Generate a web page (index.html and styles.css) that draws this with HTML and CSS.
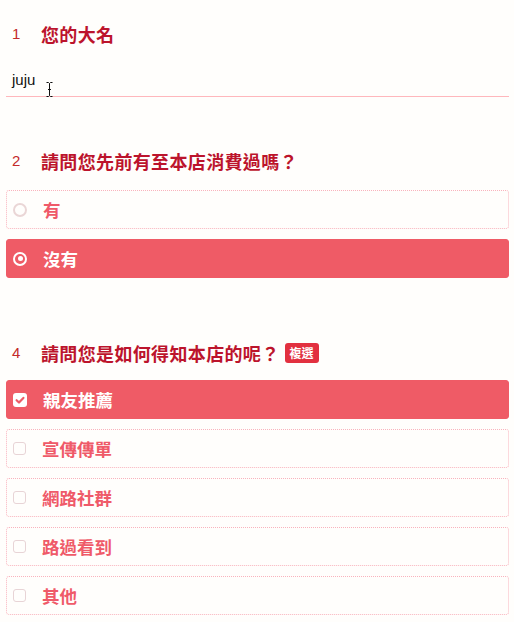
FILE: index.html
```html
<!DOCTYPE html>
<html lang="zh-Hant">
<head>
<meta charset="utf-8">
<link rel="stylesheet" href="styles.css">
</head>
<body>
<main class="form">
  <section class="q q-name">
    <h2 class="q-title"><span class="q-num">1</span><span class="q-text">您的大名</span></h2>
    <div class="text-field">
      <span class="text-value">juju</span>
      <svg class="ibeam" width="7" height="15" viewBox="0 0 7 15"><path d="M0.5 0.5h2l1 1 1-1h2M3.5 1.5v12M0.5 14.5h2l1-1 1 1h2M2 7.5h3" fill="none" stroke="#111" stroke-width="1"/></svg>
    </div>
  </section>

  <section class="q q-visit">
    <h2 class="q-title"><span class="q-num">2</span><span class="q-text">請問您先前有至本店消費過嗎？</span></h2>
    <div class="options">
      <div class="option"><span class="radio"></span><span class="opt-label">有</span></div>
      <div class="option selected"><span class="radio on"></span><span class="opt-label">沒有</span></div>
    </div>
  </section>

  <section class="q q-source">
    <h2 class="q-title"><span class="q-num">4</span><span class="q-text">請問您是如何得知本店的呢？</span><span class="badge">複選</span></h2>
    <div class="options">
      <div class="option selected"><span class="check on"><svg width="14" height="14" viewBox="0 0 14 14"><path d="M3.6 7.2l2.4 2.3 4.4-4.6" fill="none" stroke="#ee5a66" stroke-width="2.2" stroke-linecap="round" stroke-linejoin="round"/></svg></span><span class="opt-label">親友推薦</span></div>
      <div class="option"><span class="check"></span><span class="opt-label">宣傳傳單</span></div>
      <div class="option"><span class="check"></span><span class="opt-label">網路社群</span></div>
      <div class="option"><span class="check"></span><span class="opt-label">路過看到</span></div>
      <div class="option"><span class="check"></span><span class="opt-label">其他</span></div>
    </div>
  </section>
</main>
</body>
</html>
```

FILE: styles.css
```css
html, body {
  margin: 0;
  padding: 0;
  background: #fffefc;
}
body {
  font-family: "Noto Sans CJK TC", "Noto Sans", sans-serif;
}
.form {
  padding: 22px 5px 0 6px;
}
.q-title {
  display: flex;
  align-items: center;
  margin: 0;
  height: 24px;
  font-size: 18px;
  letter-spacing: 0.35px;
  font-weight: 700;
  color: #bc142c;
  line-height: 24px;
}
.q-num {
  width: 35px;
  padding-left: 6px;
  box-sizing: border-box;
  font-family: "Liberation Sans", sans-serif;
  font-weight: 400;
  font-size: 15px;
  letter-spacing: 0;
  color: #c42a2a;
}
.badge {
  margin-left: 5px;
  background: #e2303f;
  color: #fff;
  font-size: 12px;
  letter-spacing: 0;
  line-height: 20px;
  height: 20px;
  padding: 0 5px;
  border-radius: 3px;
  font-weight: 700;
}
.text-field {
  position: relative;
  margin-top: 16px;
  height: 34px;
  border-bottom: 1px solid #ffb7bc;
  display: flex;
  align-items: flex-end;
  padding-left: 6px;
}
.text-value {
  font-family: "Liberation Sans", sans-serif;
  font-size: 15px;
  color: #111;
  line-height: 22px;
  padding-bottom: 5px;
}
.ibeam {
  position: absolute;
  left: 40px;
  top: 20px;
}
.q-visit {
  margin-top: 52px;
}
.q-source {
  margin-top: 63px;
}
.options {
  display: flex;
  flex-direction: column;
  gap: 10px;
  margin-top: 17px;
}
.q-source .options {
  margin-top: 15px;
}
.option {
  display: flex;
  align-items: center;
  height: 39px;
  box-sizing: border-box;
  border: 1px dotted #f9b3bd;
  border-radius: 3px;
  padding-left: 6px;
  font-size: 17.5px;
  font-weight: 700;
  color: #ef5a69;
}
.option.selected {
  background: #ef5b66;
  border: 1px solid #ef5b66;
  color: #fff;
}
.opt-label {
  margin-left: 16px;
}
.radio {
  width: 14px;
  height: 14px;
  box-sizing: border-box;
  border: 2px solid #ead6d6;
  border-radius: 50%;
  display: flex;
  align-items: center;
  justify-content: center;
}
.radio.on {
  border-color: #fff;
}
.radio.on::after {
  content: "";
  width: 5px;
  height: 5px;
  border-radius: 50%;
  background: #fff;
}
.check {
  width: 13px;
  height: 13px;
  box-sizing: border-box;
  border: 1.5px solid #e8d4d6;
  border-radius: 3px;
  display: flex;
  align-items: center;
  justify-content: center;
}
.check.on {
  width: 14px;
  height: 14px;
  border: none;
  background: #fff;
}
```
